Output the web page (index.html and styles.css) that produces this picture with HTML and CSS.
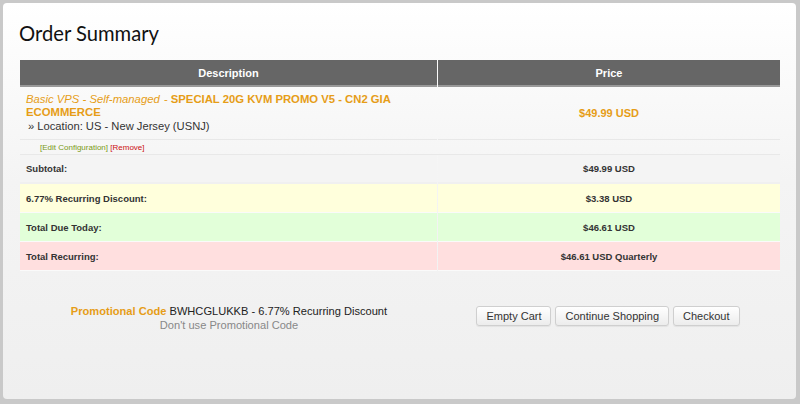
FILE: index.html
```html
<!DOCTYPE html>
<html lang="en">
<head>
  <meta charset="UTF-8">
  <title>Order Summary</title>
  <link rel="stylesheet" href="styles.css">
</head>
<body>
  <div class="card">
    <h1>Order Summary</h1>

    <table class="cart">
      <thead>
        <tr>
          <th class="col-desc">Description</th>
          <th class="col-price">Price</th>
        </tr>
      </thead>
      <tbody>
        <tr class="product">
          <td>
            <div class="product-name"><em>Basic VPS - Self-managed</em> - <strong>SPECIAL 20G KVM PROMO V5 - CN2 GIA ECOMMERCE</strong></div>
            <div class="product-opt">&raquo; Location: US - New Jersey (USNJ)</div>
          </td>
          <td class="product-price">$49.99 USD</td>
        </tr>
        <tr class="actions">
          <td colspan="2">
            <a href="#" class="edit">[Edit Configuration]</a> <a href="#" class="remove">[Remove]</a>
          </td>
        </tr>
        <tr class="sum subtotal">
          <td>Subtotal:</td>
          <td class="amount">$49.99 USD</td>
        </tr>
        <tr class="sum discount">
          <td>6.77% Recurring Discount:</td>
          <td class="amount">$3.38 USD</td>
        </tr>
        <tr class="sum due">
          <td>Total Due Today:</td>
          <td class="amount">$46.61 USD</td>
        </tr>
        <tr class="sum recurring">
          <td>Total Recurring:</td>
          <td class="amount">$46.61 USD Quarterly</td>
        </tr>
      </tbody>
    </table>

    <div class="bottom">
      <div class="promo">
        <div><span class="promo-label">Promotional Code</span> BWHCGLUKKB - 6.77% Recurring Discount</div>
        <a href="#" class="promo-remove">Don't use Promotional Code</a>
      </div>
      <div class="buttons">
        <button class="btn">Empty Cart</button>
        <button class="btn">Continue Shopping</button>
        <button class="btn">Checkout</button>
      </div>
    </div>
  </div>
</body>
</html>
```

FILE: styles.css
```css
* {
  box-sizing: border-box;
  margin: 0;
  padding: 0;
}

body {
  background: #c9c9c9;
  padding: 3px 4px 5px 3px;
  font-family: 'Liberation Sans', Arial, sans-serif;
  color: #333;
}

.card {
  height: 396px;
  background: linear-gradient(to bottom, #ffffff 0%, #f4f4f4 45%, #efefef 100%);
  border-radius: 4px;
  padding: 17px 17px 0 17px;
}

h1 {
  font-family: Lato, 'Open Sans', sans-serif;
  font-weight: 400;
  font-size: 20.2px;
  color: #111;
  margin-left: -1px;
  line-height: 26px;
  margin-bottom: 14px;
}

.cart {
  width: 762px;
  border-collapse: separate;
  border-spacing: 1px 0;
  margin-left: -1px;
}

.cart th {
  background: #666;
  color: #fff;
  font-size: 11px;
  font-weight: bold;
  height: 27px;
  border-bottom: 2px solid #999;
}

.col-desc {
  width: 417px;
}

.product td {
  padding: 6px 6px 6px;
  border-bottom: 1px solid #e8e8e8;
  vertical-align: middle;
}

.product-name {
  color: #e69d17;
  font-size: 11.3px;
  line-height: 13px;
}

.product-name em {
  padding-right: 1px;
}

.product-name strong {
  font-weight: bold;
}

.product-opt {
  font-size: 11.2px;
  line-height: 14px;
  padding-left: 2px;
}

.product-price {
  text-align: center;
  color: #e69d17;
  font-weight: bold;
  font-size: 11px;
}

.actions td {
  height: 15px;
  padding-left: 20px;
  font-size: 8px;
  font-family: 'Liberation Sans Narrow', 'Liberation Sans', sans-serif;
  border-bottom: 1px solid #e8e8e8;
}

.actions a {
  text-decoration: none;
}

.edit {
  color: #7a9a16;
}

.remove {
  color: #cc1010;
}

.sum td {
  height: 29px;
  font-size: 9.5px;
  font-weight: bold;
  padding-left: 6px;
  border-bottom: 1px solid #fafafa;
}

.sum td.amount {
  text-align: center;
  padding-left: 0;
}

.subtotal td {
  background: #f4f4f4;
  border-bottom: 2px solid #f0f0f0;
}

.discount td {
  background: #ffffdc;
}

.due td {
  background: #e2ffd9;
}

.recurring td {
  background: #ffdfdf;
}

.bottom {
  display: flex;
  margin-top: 33px;
}

.promo {
  width: 418px;
  text-align: center;
  font-size: 11.1px;
  line-height: 14px;
  color: #222;
}

.promo-label {
  color: #e69d17;
  font-weight: bold;
}

.promo-remove {
  color: #888;
  text-decoration: none;
}

.buttons {
  flex: 1;
  display: flex;
  justify-content: center;
  gap: 4px;
  padding-right: 1px;
  margin-top: 2px;
}

.btn {
  font-family: 'Liberation Sans', Arial, sans-serif;
  font-size: 11px;
  color: #333;
  height: 20px;
  padding: 0 9px;
  background: linear-gradient(to bottom, #ffffff, #ececec);
  border: 1px solid #cfcfcf;
  border-radius: 3px;
  box-shadow: 0 1px 1px rgba(0, 0, 0, 0.06);
}
```
